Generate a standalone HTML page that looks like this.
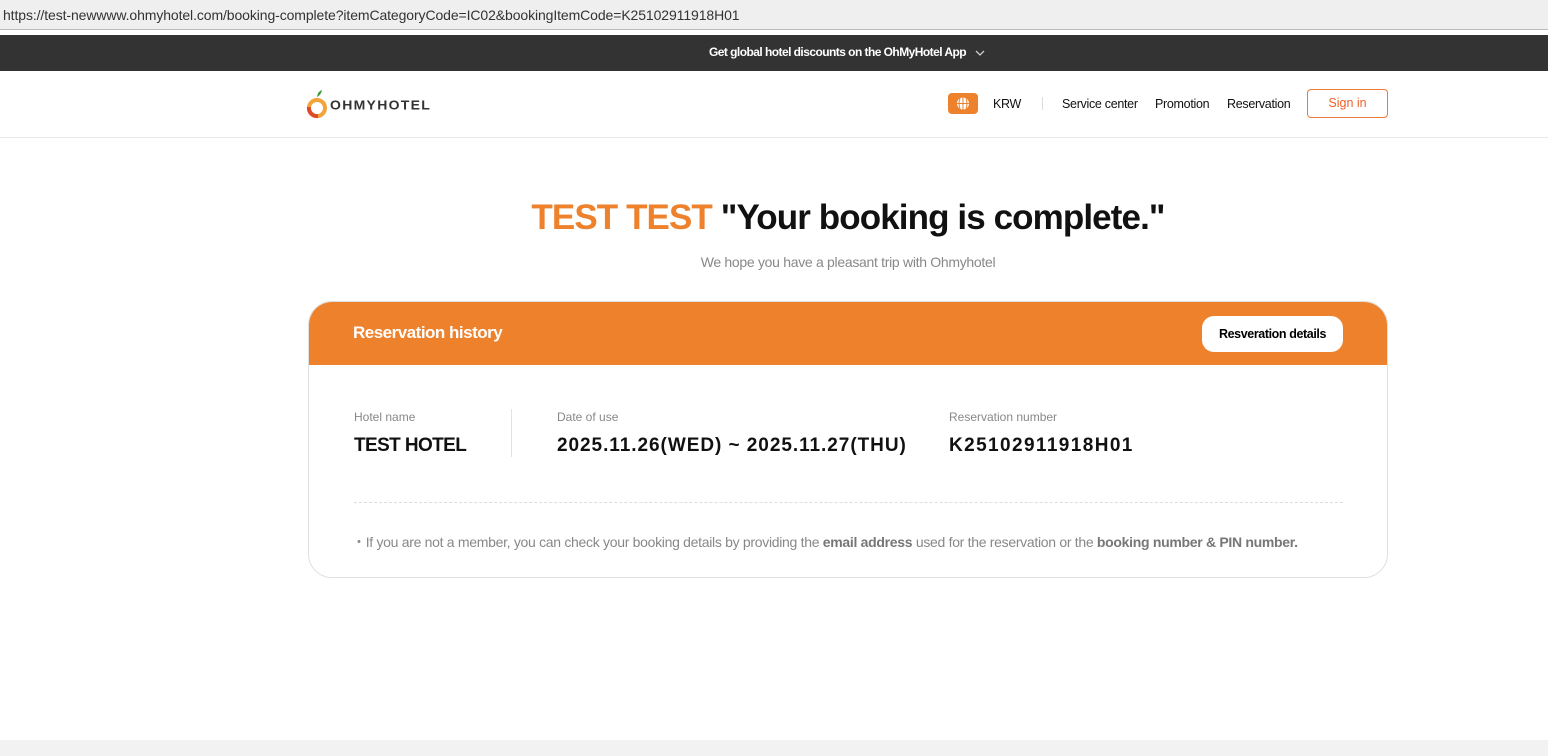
<!DOCTYPE html>
<html><head><meta charset="utf-8"><style>
*{margin:0;padding:0;box-sizing:border-box}
body{width:1548px;height:756px;overflow:hidden;font-family:"Liberation Sans",sans-serif;background:#fff;position:relative}
.abs{position:absolute}
.url{left:0;top:0;width:1548px;height:30px;background:#efefef;border-bottom:1px solid #bbb;font-size:14px;color:#333;padding:7px 0 0 3px;letter-spacing:-0.1px}
.top{left:0;top:35px;width:1548px;height:36px;background:#333}
.hdr{left:0;top:71px;width:1548px;height:67px;border-bottom:1px solid #e8e8e8}
.nav{font-size:12.5px;color:#111;top:97px;letter-spacing:-0.3px}
.foot{left:0;top:740px;width:1548px;height:16px;background:#f2f2f2}
</style></head><body>
<div class="abs url">https://test-newwww.ohmyhotel.com/booking-complete?itemCategoryCode=IC02&amp;bookingItemCode=K25102911918H01</div>
<div class="abs top"></div>
<div class="abs" style="left:709px;top:45px;color:#fff;font-size:12px;font-weight:bold;letter-spacing:-0.55px">Get global hotel discounts on the OhMyHotel App</div>
<svg class="abs" style="left:975px;top:49px" width="10" height="8"><path d="M1 2l4 4 4-4" stroke="#ccc" stroke-width="1.3" fill="none"/></svg>
<div class="abs hdr"></div>
<svg class="abs" style="left:306px;top:88px" width="24" height="32" viewBox="0 0 24 32"><path d="M11 9 Q12 3 16 2 Q15 7 11 9Z" fill="#3a9a3a"/><circle cx="11" cy="20" r="8" fill="none" stroke="#f2a33a" stroke-width="4"/><path d="M3 19 A8 8 0 0 0 12 28" stroke="#e0482a" stroke-width="4" fill="none"/></svg>
<div class="abs" style="left:330px;top:97px;font-size:14px;font-weight:bold;color:#333;letter-spacing:1.3px;transform:scaleY(0.9)">OHMYHOTEL</div>
<div class="abs" style="left:948px;top:93px;width:30px;height:21px;background:#ee812c;border-radius:4px"><svg width="30" height="21"><circle cx="15" cy="10.5" r="6" fill="#fff"/><path d="M9 10.5h12M15 4.5v12M12 5.5q-2 5 0 10M18 5.5q2 5 0 10" stroke="#ee812c" stroke-width="1" fill="none"/></svg></div>
<div class="abs nav" style="left:993px">KRW</div>
<div class="abs" style="left:1042px;top:97px;width:1px;height:13px;background:#ddd"></div>
<div class="abs nav" style="left:1062px">Service center</div>
<div class="abs nav" style="left:1155px">Promotion</div>
<div class="abs nav" style="left:1227px">Reservation</div>
<div class="abs" style="left:1307px;top:89px;width:81px;height:29px;border:1px solid #ee7a3a;border-radius:4px;color:#f0602a;font-size:12.5px;text-align:center;line-height:27px">Sign in</div>
<div class="abs" style="left:0;top:198px;width:1696px;text-align:center;font-size:35px;font-weight:bold;letter-spacing:-0.9px;color:#111"><span style="color:#ee812c">TEST TEST</span> "Your booking is complete."</div>
<div class="abs" style="left:0;top:254px;width:1696px;text-align:center;font-size:14px;color:#888;letter-spacing:-0.3px">We hope you have a pleasant trip with Ohmyhotel</div>
<div class="abs" style="left:308px;top:301px;width:1080px;height:277px;border:1px solid #e0e0e0;border-radius:24px;overflow:hidden">
 <div style="height:63px;background:#ee812c;position:relative">
  <div class="abs" style="left:44px;top:21px;color:#fff;font-size:17px;font-weight:bold;letter-spacing:-0.5px">Reservation history</div>
  <div class="abs" style="left:893px;top:14px;width:141px;height:36px;background:#fff;border-radius:12px;font-size:12.5px;font-weight:bold;text-align:center;line-height:36px;letter-spacing:-0.4px">Resveration details</div>
 </div>
</div>
<div class="abs" style="left:354px;top:410px;font-size:12px;color:#888">Hotel name</div>
<div class="abs" style="left:354px;top:435px;font-size:19px;font-weight:bold;color:#111;letter-spacing:-0.6px">TEST HOTEL</div>
<div class="abs" style="left:511px;top:409px;width:1px;height:48px;background:#e2e2e2"></div>
<div class="abs" style="left:557px;top:410px;font-size:12px;color:#888">Date of use</div>
<div class="abs" style="left:557px;top:435px;font-size:19px;font-weight:bold;color:#111;letter-spacing:0.95px">2025.11.26(WED) ~ 2025.11.27(THU)</div>
<div class="abs" style="left:949px;top:410px;font-size:12px;color:#888">Reservation number</div>
<div class="abs" style="left:949px;top:435px;font-size:19px;font-weight:bold;color:#111;letter-spacing:1.4px">K25102911918H01</div>
<div class="abs" style="left:354px;top:502px;width:989px;border-top:1px dashed #ddd"></div>
<div class="abs" style="left:352px;top:532px;font-size:14px;color:#888;letter-spacing:-0.3px">・If you are not a member, you can check your booking details by providing the <b style="color:#777">email address</b> used for the reservation or the <b style="color:#777">booking number &amp; PIN number.</b></div>
<div class="abs foot"></div>
</body></html>
